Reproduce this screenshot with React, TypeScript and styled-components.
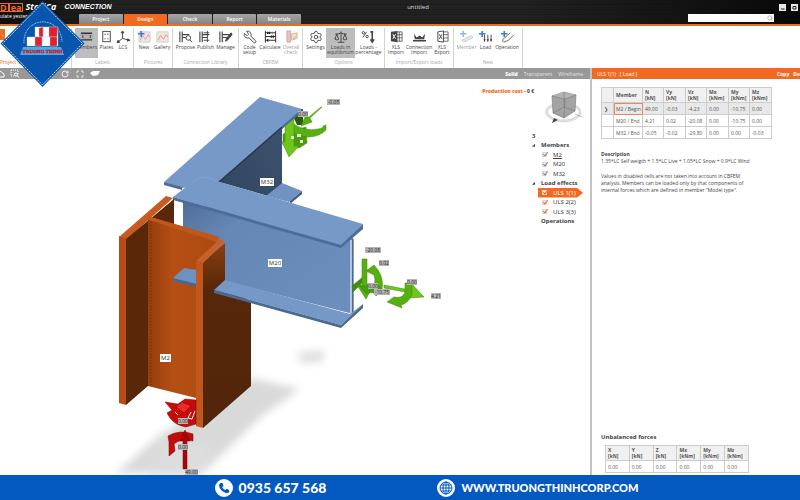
import React from "react";
import styled, { createGlobalStyle } from "styled-components";
import { Wrench, Settings, Scale, Search, RotateCw, Maximize } from "lucide-react";

const Global = createGlobalStyle`
  * { box-sizing: border-box; }
  body { margin: 0; background: #fff; overflow: hidden; }
  button, input { font: inherit; color: inherit; border: 0; padding: 0; margin: 0; background: none; }
  svg { display: block; flex: none; }
`;

const ORANGE = "#f26a21";

const Page = styled.div`
  position: relative;
  min-height: 100vh;
  display: flex;
  flex-direction: column;
  font: 5px/6px "Open Sans", "Noto Sans", sans-serif;
  color: #444;
`;

/* ---------- title bar ---------- */
const TopBar = styled.header`
  height: 26px;
  display: grid;
  grid-template-rows: 14px 10px;
  border-bottom: 2px solid ${ORANGE};
  background:
    linear-gradient(90deg, rgba(0, 0, 0, 0.5), transparent 15%, transparent 65%, rgba(0, 0, 0, 0.75)),
    repeating-linear-gradient(180deg, #161616 0, #2c2c2c 1px, #191919 2px, #252525 3px, #1a1a1a 5px);
`;
const TitleRow = styled.div`
  display: grid;
  grid-template-columns: 1fr 36px 1fr;
  align-items: center;
  padding-left: 36px;
  color: #ddd;
`;
const Brand = styled.div`
  display: flex;
  align-items: center;
  gap: 2px;
  margin-left: -38px;
  color: #fff;
  font: italic 700 9px/12px "Open Sans", sans-serif;
  white-space: nowrap;
`;
const BrandBox = styled.span`
  border: 1px solid ${ORANGE};
  color: ${ORANGE};
  font-style: normal;
  line-height: 7px;
  height: 9px;
  padding: 0 1px;
  & + & { margin-left: -2px; }
`;
const Product = styled.span`
  margin-left: 6px;
  font: italic 700 7px/12px "Liberation Sans", sans-serif;
`;
const Title = styled.span`
  text-align: center;
  font-size: 6px;
`;
const WindowButtons = styled.div`
  display: flex;
  justify-content: flex-end;
  gap: 5px;
  padding-right: 2px;
`;
const WindowButton = styled.button`
  width: 7px;
  height: 7px;
  background: #e8e8e8;
  display: grid;
  place-items: center;
`;
const TabRow = styled.div`
  display: grid;
  grid-template-columns: 79px 222px 1fr 86px 26px;
  color: #fff;
`;
const Tagline = styled.span`
  font-size: 5px;
  line-height: 5px;
  white-space: nowrap;
`;
const Tabs = styled.nav`
  display: grid;
  grid-template-columns: repeat(5, 1fr);
  gap: 1px;
`;
const Tab = styled.button<{ $on?: boolean }>`
  background: ${(p) => (p.$on ? ORANGE : "linear-gradient(#a5a5a5, #858585)")};
  border-radius: 1px 1px 0 0;
  color: #fff;
  font-weight: 600;
`;
const SearchBox = styled.label`
  grid-column: 4;
  display: flex;
  align-items: center;
  height: 8px;
  background: #fff;
  color: #777;
  padding-right: 1px;
  input { flex: 1; min-width: 0; height: 8px; outline: 0; }
`;

/* ---------- ribbon ---------- */
const Ribbon = styled.div`
  display: flex;
  height: 42px;
  padding-top: 2px;
`;
const Group = styled.section<{ $w: number }>`
  width: ${(p) => p.$w}px;
  flex: none;
  border-right: 1px solid #d4d4d4;
  display: flex;
  flex-direction: column;
  justify-content: space-between;
`;
const Tools = styled.div`
  display: flex;
  justify-content: center;
`;
const Tool = styled.button<{ $w: number; $on?: boolean; $dim?: boolean }>`
  width: ${(p) => p.$w}px;
  height: 30px;
  flex: none;
  display: flex;
  flex-direction: column;
  align-items: center;
  gap: 1px;
  padding-top: 2px;
  line-height: 5px;
  white-space: pre-line;
  background: ${(p) => (p.$on ? "#bdbdbd" : "none")};
  opacity: ${(p) => (p.$dim ? 0.55 : 1)};
`;
const Caption = styled.div<{ $hot?: boolean }>`
  text-align: ${(p) => (p.$hot ? "left" : "center")};
  color: ${(p) => (p.$hot ? ORANGE : "#aaa")};
  padding-bottom: 3px;
  white-space: nowrap;
`;
const ProjectButton = styled.button`
  width: 5px;
  height: 11px;
  margin-top: 1px;
  background: ${ORANGE};
  color: #fff;
`;

const paths: Record<string, React.ReactNode> = {
  members: <g stroke="#333" strokeWidth="1.4"><path d="M2 3.500H14M2 10.500H14" /><path d="M4 5.500V8.500M12 5.500V8.500" strokeWidth="1" /><path d="M1 5.500H14V8.500H1" stroke="#777" strokeWidth=".5" /></g>,
  plates: <><rect x="4" y="1.500" width="8" height="11" /><path d="M6.500 4v1M9.500 4v1M6.500 9v1M9.500 9v1" strokeWidth="1.500" /></>,
  lcs: <><path d="M7 2V9L14 11M7 9L2 13" /><path d="M5.500 3L7 1L8.500 3ZM12.500 9.500L15 11L12 12ZM2 11L1 13.500L4 13Z" fill="#444" /></>,
  picture: <><rect x="2" y="2" width="12" height="11" fill="#eee5e2" stroke="#bbb" strokeWidth=".6" /><path d="M3 11L6 6L9 10L12 5L14 8" stroke="#e69b80" /></>,
  connection: <><path d="M2 1.500V13M4.500 1.500V13M5 5H12M5 8H10" strokeWidth="1.200" /></>,
  calculate: <><path d="M2.500 1V13.500M13.500 1V13.500M2.500 3H13.500M2.500 7H13.500M2.500 11H13.500" stroke="#222" /><path d="M5 1.800v2.400M7 1.800v2.400M9 5.800v2.400M11 5.800v2.400M5 9.800v2.400" stroke="#222" strokeWidth="1.500" /><path d="M10 1.800v2.400M6 9.800v2.400" stroke="#e34b32" /></>,
  overall: <><path d="M3 1H7V13H3Z" fill="#d4938b" stroke="#b85e55" /><path d="M8 4L14 3V9L8 11Z" fill="#dfc19b" stroke="#a88b64" /><path d="M9 8L11 10L14 5" stroke="#53a653" /></>,
  percent: <><path d="M2 8L6 2" /><circle cx="2.500" cy="3" r="1.300" /><circle cx="6.500" cy="7" r="1.300" /><path d="M10 2H13M12 2V12M10 10L12 13L14 10" strokeWidth="1.700" /></>,
  excel: <><path d="M8 2H14V12H8M8 5H14M8 8.500H14M11 2V12" strokeWidth=".8" /><path d="M2 2L9 1V13L2 12Z" fill="#444" stroke="none" /><path d="M4 4.500L7 9.500M7 4.500L4 9.500" stroke="#fff" /></>,
  excelOut: <><path d="M8 2H14V12H8M8 5H14M8 8.500H14" strokeWidth=".8" /><path d="M3 2L9 1V13L3 12Z" fill="#fff" /><path d="M4.500 4.500L7.500 9.500M7.500 4.500L4.500 9.500" /></>,
  connImport: <><path d="M1 11.500H15" strokeWidth="1.700" /><path d="M2 4L5 8L8 6L11 8L14 4L13 10H3Z" fill="#444" stroke="none" /></>,
  member: <path d="M3 11L13 6L15 8L5 13Z" fill="#ddd" stroke="#888" strokeWidth=".8" />,
  load: <><path d="M7 5V12M10.500 5V12M14 5V12" /><path d="M5.800 10L7 13L8.200 10ZM9.300 10L10.500 13L11.700 10ZM12.800 10L14 13L15.200 10Z" fill="#444" stroke="none" /></>,
  operation: <path d="M3 10L11 3M4 13L9 11L15 5M3 10V13" stroke="#666" />,
};
const magnify = <><circle cx="11" cy="8.500" r="2.500" fill="#fff" /><path d="M12.500 10.500L15 13" /></>;
const plus = <path d="M1 4H8M4.500 1V7.500" stroke="#3b80cc" strokeWidth="1.800" />;

function Icon({ name, extra }: { name: string; extra?: React.ReactNode }) {
  return (
    <svg width="15" height="14" viewBox="0 0 16 15" fill="none" stroke="#444" strokeWidth="1">
      {paths[name]}
      {extra}
    </svg>
  );
}
const lucide = { size: 14, strokeWidth: 1.6, color: "#444" };
const FlippedWrench = styled(Wrench)`
  transform: scaleX(-1);
`;

type ToolDef = { label: string; w: number; icon: React.ReactNode; on?: boolean; dim?: boolean };
const groups: { name: string; w: number; tools: ToolDef[] }[] = [
  { name: "Labels", w: 62, tools: [
    { label: "Members", w: 23, icon: <Icon name="members" />, on: true },
    { label: "Plates", w: 18, icon: <Icon name="plates" /> },
    { label: "LCS", w: 15, icon: <Icon name="lcs" /> },
  ] },
  { name: "Pictures", w: 39, tools: [
    { label: "New", w: 18, icon: <Icon name="picture" extra={plus} /> },
    { label: "Gallery", w: 18, icon: <Icon name="picture" /> },
  ] },
  { name: "Connection Library", w: 66, tools: [
    { label: "Propose", w: 20, icon: <Icon name="connection" extra={magnify} /> },
    { label: "Publish", w: 20, icon: <Icon name="connection" extra={<path d="M6 3H12M6 11H12M10 1V13" />} /> },
    { label: "Manage", w: 20, icon: <Icon name="connection" extra={<path d="M8 12L9 9L14 3L15 5L10 11Z" fill="#444" />} /> },
  ] },
  { name: "CBFEM", w: 64, tools: [
    { label: "Code\nsetup", w: 18, icon: <FlippedWrench {...lucide} /> },
    { label: "Calculate", w: 23, icon: <Icon name="calculate" /> },
    { label: "Overall\ncheck", w: 19, icon: <Icon name="overall" />, dim: true },
  ] },
  { name: "Options", w: 82, tools: [
    { label: "Settings", w: 21, icon: <Settings {...lucide} /> },
    { label: "Loads in\nequilibrium", w: 29, icon: <Scale {...lucide} />, on: true },
    { label: "Loads -\npercentage", w: 27, icon: <Icon name="percent" /> },
  ] },
  { name: "Import/Export loads", w: 69, tools: [
    { label: "XLS\nImport", w: 19, icon: <Icon name="excel" /> },
    { label: "Connection\nImport", w: 27, icon: <Icon name="connImport" /> },
    { label: "XLS\nExport", w: 19, icon: <Icon name="excelOut" /> },
  ] },
  { name: "New", w: 69, tools: [
    { label: "Member", w: 20, icon: <Icon name="member" extra={plus} />, dim: true },
    { label: "Load", w: 18, icon: <Icon name="load" extra={plus} /> },
    { label: "Operation", w: 25, icon: <Icon name="operation" extra={plus} /> },
  ] },
];

/* ---------- work area ---------- */
const Work = styled.main`
  flex: 1;
  display: grid;
  grid-template-columns: 1fr 2px 208px;
  min-height: 0;
`;
const Splitter = styled.div`
  background: #c4c4c4;
`;
const Column = styled.section`
  display: flex;
  flex-direction: column;
  min-width: 0;
`;
const ViewBar = styled.div`
  height: 11px;
  display: flex;
  align-items: center;
  gap: 6px;
  padding-right: 7px;
  background: #989898;
  color: #eee;
`;
const ViewTools = styled.div`
  display: grid;
  grid-template-columns: 10px 24px 27px 15px 14px 12px;
  align-items: center;
  margin-right: auto;
`;
const ViewMode = styled.button<{ $on?: boolean }>`
  font-weight: ${(p) => (p.$on ? 800 : 400)};
  color: ${(p) => (p.$on ? "#fff" : "#e4e4e4")};
`;
const Viewport = styled.div`
  position: relative;
  flex: 1;
`;
const Model = styled.svg`
  width: 100%;
  height: 100%;
`;
const Cost = styled.div`
  position: absolute;
  top: 9px;
  right: 56px;
  font-weight: 700;
  color: #333;
  b { color: ${ORANGE}; }
`;
const CubeHolder = styled.div`
  position: absolute;
  top: 10px;
  right: 6px;
`;
const Tree = styled.div`
  position: absolute;
  top: 52px;
  right: 7px;
  width: 51px;
  height: 95px;
  display: grid;
  grid-template-rows: repeat(10, 1fr);
  font: 6px/8px "Noto Sans", sans-serif;
`;
const Node = styled.div<{ $leaf?: boolean; $on?: boolean }>`
  display: flex;
  align-items: center;
  gap: 6px;
  font-weight: ${(p) => (p.$leaf ? 400 : 700)};
  margin-left: ${(p) => (p.$leaf ? 6 : 0)}px;
  padding-left: ${(p) => (p.$leaf ? 4 : 0)}px;
  color: ${(p) => (p.$on ? "#fff" : "#444")};
  background: ${(p) => (p.$on ? ORANGE : "none")};
  clip-path: ${(p) => (p.$on ? "polygon(0 0, 87% 0, 100% 50%, 87% 100%, 0 100%)" : "none")};
`;
const Twisty = styled.span<{ $empty?: boolean }>`
  width: 3px;
  height: 3px;
  background: ${(p) => (p.$empty ? "none" : "#444")};
  clip-path: polygon(100% 0, 100% 100%, 0 100%);
`;
const TreeLabel = styled.label`
  display: flex;
  align-items: center;
  gap: 6px;
`;
const Tick = styled.input<{ $tone: string }>`
  appearance: none;
  width: 5px;
  height: 5px;
  background: #eee;
  border: 1px solid #d8d8d8;
  &:checked::after {
    content: "";
    display: block;
    width: 2px;
    height: 4px;
    margin: -2px 0 0 1px;
    border: solid ${(p) => p.$tone};
    border-width: 0 1px 1px 0;
    transform: rotate(40deg);
  }
`;

/* ---------- load panel ---------- */
const PanelBar = styled.div`
  height: 11px;
  display: flex;
  align-items: center;
  justify-content: space-between;
  padding-left: 5px;
  background: ${ORANGE};
  color: #fff;
  white-space: pre;
`;
const PanelActions = styled.div`
  display: flex;
  gap: 4px;
  font-weight: 700;
`;
const PanelBody = styled.div`
  flex: 1;
  display: flex;
  flex-direction: column;
  padding: 8px 9px 2px;
`;
const Grid = styled.table`
  border-collapse: collapse;
  table-layout: fixed;
  width: 171px;
  color: #555;
  th, td { border: 1px solid #ccc; padding: 0 2px; text-align: left; white-space: nowrap; }
  th { height: 15px; background: #f0f0f0; font-weight: 700; line-height: 6px; }
  td { height: 12px; }
`;
const Forces = styled(Grid)`
  width: 144px;
  margin: 4px 0 0 4px;
`;
const Row = styled.tr<{ $on?: boolean }>`
  background: ${(p) => (p.$on ? "#e8e8e8" : "#fff")};
  td:nth-child(2) { outline: ${(p) => (p.$on ? "1px solid #e58a5c" : "none")}; outline-offset: -1px; }
`;
const Heading = styled.h2`
  margin: 0;
  font-size: 5px;
  line-height: 7px;
`;
const BigHeading = styled(Heading)`
  margin-top: auto;
  font: 700 6px/8px "Noto Sans", sans-serif;
`;
const Description = styled.div`
  margin-top: 12px;
  p { margin: 0 0 8px; line-height: 7px; white-space: nowrap; }
`;

/* ---------- footer ---------- */
const Footer = styled.footer`
  height: 25px;
  display: flex;
  align-items: center;
  justify-content: center;
  gap: 111px;
  padding-left: 53px;
  background: #0459c1;
  color: #fff;
`;
const Contact = styled.a<{ $size: number }>`
  display: flex;
  align-items: center;
  gap: 6px;
  color: #fff;
  text-decoration: none;
  font: 900 ${(p) => p.$size}px/18px Lato, sans-serif;
`;
const LogoHolder = styled.div`
  position: absolute;
  top: 0;
  left: 0;
`;

function CompanyLogo() {
  return (
    <svg width="86" height="88" viewBox="0 0 86 88">
      <path d="M42.500 1L84.500 43.500L42.500 87L.5 43.500Z" fill="#0756ab" />
      <path d="M42.500 3L82.500 43.500L42.500 85L2.500 43.500Z" fill="none" stroke="#fff" strokeWidth=".8" strokeDasharray="2 1" />
      <path d="M24 43C23 16 61 14 62 42" fill="none" stroke="#a9cdf4" strokeWidth="1" strokeDasharray="1 .7" />
      <g stroke="#b8c8dc" strokeWidth=".4">
        <path d="M35 27H58V37H35Z" fill="#fff" /><path d="M39 28L43 27V37H39ZM49 27H58L57 37H49Z" fill="#e4202d" />
        <path d="M27 37H58V46H27Z" fill="#fff" /><path d="M35 37H42V46H35ZM50 37H57V46H50Z" fill="#e4202d" />
      </g>
      <path d="M23 47H61L64 55H20Z" fill="#48aee8" />
      <text x="42.500" y="53" textAnchor="middle" fontFamily="Liberation Serif" fontWeight="700" fontSize="5" fill="#c9202b" stroke="#c9202b" strokeWidth=".4">TRUONG THINH</text>
    </svg>
  );
}

function Tag({ x, y, children }: { x: number; y: number; children: string }) {
  const w = Math.round(children.length * 2.6);
  return (
    <g>
      <rect x={x} y={y} width={w} height="6" fill="#b5b5b5" />
      <text x={x + w / 2} y={y + 5} textAnchor="middle" fontSize="5" fill="#222">{children}</text>
    </g>
  );
}
function Name({ x, y, children }: { x: number; y: number; children: string }) {
  const w = children.length * 3 + 5;
  return (
    <g>
      <rect x={x} y={y} width={w} height="8" fill="#fff" />
      <text x={x + w / 2} y={y + 6} textAnchor="middle" fontSize="6" fill="#333">{children}</text>
    </g>
  );
}

function SteelModel() {
  return (
    <Model viewBox="0 79 590 396" preserveAspectRatio="xMidYMid slice" role="img" aria-label="Steel connection model">
      <defs>
        <filter id="soft" x="-20%" y="-20%" width="140%" height="140%"><feGaussianBlur stdDeviation="4" /></filter>
        <linearGradient id="web" x1="0" y1="0" x2="1" y2="1"><stop offset="0" stopColor="#506c94" /><stop offset=".25" stopColor="#6587b5" /><stop offset="1" stopColor="#6c8fbe" /></linearGradient>
        <linearGradient id="webDark" x1="0" y1="1" x2="1" y2="0"><stop offset="0" stopColor="#32465f" /><stop offset="1" stopColor="#3b526e" /></linearGradient>
        <linearGradient id="rust"><stop offset="0" stopColor="#953d0c" /><stop offset=".35" stopColor="#b54f14" /><stop offset="1" stopColor="#ad4911" /></linearGradient>
        <linearGradient id="side" x1="0" y1="0" x2="0" y2="1"><stop offset="0" stopColor="#8c3e12" /><stop offset=".25" stopColor="#572709" /><stop offset="1" stopColor="#52250b" /></linearGradient>
      </defs>
      <g filter="url(#soft)">
        <path d="M250 378L300 389L262 416L205 471L115 474L160 435Z" fill="#d9d9d9" />
        <path d="M160 440L215 445L200 476L150 476Z" fill="#ddd" />
        <path d="M296 353L325 350L322 362L302 363Z" fill="#ddd" />
      </g>

      <path d="M296 112L303 109L303 125H297L293 116Z" fill="#2b5a0c" />
      <g fill="#56b010" stroke="#418b0c" strokeWidth=".5">
        <path d="M283 134L306 127L307 143L299 148L283 145Z" fill="#4b9c0f" />
        <path d="M322 107L310 118L312 122L301 126L305 117L309 117L321 107Z" />
        <path d="M292 123Q305 132 318 129Q324 128 323 126L326 125V130Q319 137 308 137Q296 136 290 130Z" />
        <path d="M285 120V142H282L289 157L299 146H294V118Z" fill="#6cc71a" />
      </g>
      <path d="M291 136h3v3h-3ZM297 134h4v3h-4ZM300 140h3v3h-3Z" fill="#e6f5d8" />

      <path d="M164 182L260 97L302 109L301 112L282 129L220 184L182 188Z" fill="#7699c7" />
      <path d="M164 182L182 187L182 190L164 185ZM302 109V112L282 129V126Z" fill="#4d6b93" />
      <path d="M282 127V184L268 196L219 182Z" fill="url(#webDark)" />
      <path d="M282 127L219 182" stroke="#28394e" strokeWidth="1.500" />
      <path d="M282 183L302 191L289 202L266 196Z" fill="#7093c2" />
      <path d="M302 191V194L290 204V201Z" fill="#435d81" />

      <path d="M183 202L353 236V314L225 281L183 240Z" fill="url(#web)" />
      <path d="M173 197L190 184L220 182L363 224L341 246Z" fill="#7699c7" />
      <path d="M173 197L341 245L363 224V229L341 248L173 200Z" fill="#4c6d99" />
      <path d="M351 240V314" stroke="#c9d8ed" strokeWidth="1.500" />
      <path d="M353 239V315" stroke="#2c405c" />
      <path d="M192 183Q196 177 206 177Q215 179 217 183" fill="none" stroke="#8dabd1" strokeWidth=".5" />

      <path d="M119 237L166 196L173 198L126 240Z" fill="#c75b20" />
      <path d="M126 239L174 199V225L148 220V386L126 405Z" fill="#592709" />
      <path d="M119 236L126 239V405L119 403Z" fill="#b64d13" />
      <path d="M148 219L218 239L204 262V400L148 386Z" fill="url(#rust)" />
      <path d="M146 219L151 217L220 237L217 242Z" fill="#c1571c" />
      <path d="M151 222V387" stroke="#632c0b" strokeDasharray="1 2" />
      <path d="M173 278L184 268L197 270V286L173 281Z" fill="#6d91c1" />
      <path d="M173 278L197 284V287L173 281Z" fill="#466790" />
      <path d="M203 262L225 243V281L251 303V386L203 428Z" fill="url(#side)" />
      <path d="M196 261L220 239L225 242L203 263Z" fill="#c9602b" />
      <path d="M196 261L203 263V428L196 426Z" fill="#c0581e" />
      <path d="M214 290L225 280L350 314L363 304L341 325Z" fill="#7598c6" />
      <path d="M214 290L341 325L363 304V308L341 328L214 293Z" fill="#4a6993" />

      <g fill="#56b010" stroke="#3f850d" strokeWidth=".5">
        <path d="M352 286L364 276L366 279L353 292Z" fill="#408a0e" />
        <path d="M366 271L374 265L378 270Q384 279 382 290L376 296L371 290Q377 284 374 275Z" />
        <path d="M362 259H367V284H374L366 299L357 285H362Z" />
        <path d="M359 286L378 285L382 292L366 293Z" fill="#489a0e" />
        <path d="M384 285L410 290V282L424 297L410 298V293L384 288Z" fill="#6cc71a" />
        <path d="M405 283H412V294Q409 303 401 305L402 308L387 302L394 297Q403 299 405 292Z" />
      </g>
      <g fill="#c60b0b" stroke="#790606" strokeWidth=".5">
        <path d="M165 402L178 404L185 399L196 400V424L186 427Q175 425 170 418L167 413L172 410Z" />
        <path d="M182 402L191 406L184 413L176 407Z" fill="#ef2929" />
        <path d="M168 436Q180 429 193 434V441Q181 438 174 444L175 451L169 456V442Z" />
        <path d="M185 430L190 441H187V469H183V441H180Z" fill="#a80707" />
      </g>
      <path d="M191 412L188 418L192 419L195 411M175 412L178 415" stroke="#fff" strokeWidth="1" fill="none" />

      <Name x={260} y={178}>M32</Name>
      <Name x={268} y={259}>M20</Name>
      <Name x={160} y={354}>M2</Name>
      <Tag x={327} y={99}>-0.05</Tag>
      <Tag x={298} y={111}>0.00</Tag>
      <Tag x={365} y={247}>-20.08</Tag>
      <Tag x={379} y={260}>0.02</Tag>
      <Tag x={368} y={283}>0.00</Tag>
      <Tag x={374} y={289}>-10.75</Tag>
      <Tag x={407} y={279}>0.00</Tag>
      <Tag x={431} y={293}>4.21</Tag>
      <Tag x={178} y={418}>0.00</Tag>
      <Tag x={178} y={444}>0.00</Tag>
      <Tag x={185} y={469}>49.00</Tag>
    </Model>
  );
}

const loads = [
  ["M2 / Begin", "49.00", "-0.03", "-4.23", "0.00", "-10.75", "0.00"],
  ["M20 / End", "4.21", "0.02", "-20.08", "0.00", "-10.75", "0.00"],
  ["M32 / End", "-0.05", "-0.02", "-29.80", "0.00", "0.00", "-0.03"],
];
const forceHead = ["N|kN", "Vy|kN", "Vz|kN", "Mx|kNm", "My|kNm", "Mz|kNm"];
const sumHead = ["X|kN", "Y|kN", "Z|kN", "Mx|kNm", "My|kNm", "Mz|kNm"];

function HeadCell({ text }: { text: string }) {
  const [name, unit] = text.split("|");
  return <th>{name}<br />[{unit}]</th>;
}
function Leaf({ name, tone, on, line }: { name: string; tone: string; on?: boolean; line?: boolean }) {
  return (
    <Node $leaf $on={on}>
      <TreeLabel>
        <Tick type="checkbox" defaultChecked $tone={tone} />
        {line ? <u>{name}</u> : name}
      </TreeLabel>
    </Node>
  );
}

export default function App() {
  return (
    <Page>
      <Global />
      <TopBar>
        <TitleRow>
          <Brand>
            <BrandBox>D</BrandBox><BrandBox>ea</BrandBox>
            <span>StatiCa</span>
            <Product>CONNECTION</Product>
          </Brand>
          <Title>untitled</Title>
          <WindowButtons>
            <WindowButton aria-label="Minimize"><svg width="7" height="7"><path d="M2 5H5.500" stroke="#222" /></svg></WindowButton>
            <WindowButton aria-label="Maximize"><svg width="7" height="7"><path d="M2 2.500H5V5H2Z" fill="none" stroke="#222" /></svg></WindowButton>
          </WindowButtons>
        </TitleRow>
        <TabRow>
          <Tagline>ulate yesterday's</Tagline>
          <Tabs>
            <Tab>Project</Tab><Tab $on>Design</Tab><Tab>Check</Tab><Tab>Report</Tab><Tab>Materials</Tab>
          </Tabs>
          <SearchBox><input type="text" aria-label="Search" /><Search size={6} /></SearchBox>
        </TabRow>
      </TopBar>

      <Ribbon>
        <Group $w={72}>
          <ProjectButton aria-label="Project items">–</ProjectButton>
          <Caption $hot>Project items</Caption>
        </Group>
        {groups.map((g) => (
          <Group key={g.name} $w={g.w}>
            <Tools>
              {g.tools.map((t) => (
                <Tool key={t.label} $w={t.w} $on={t.on} $dim={t.dim}>{t.icon}<span>{t.label}</span></Tool>
              ))}
            </Tools>
            <Caption>{g.name}</Caption>
          </Group>
        ))}
      </Ribbon>

      <Work>
        <Column>
          <ViewBar>
            <ViewTools>
              <svg width="6" height="8" viewBox="0 0 6 8"><path d="M0 1L4 4V7H0" fill="none" stroke="#fff" /></svg>
              <svg width="10" height="9" viewBox="0 0 10 9" fill="none" stroke="#fff"><path d="M1 1H8V5M1 1V7H4" strokeDasharray="1 1" /><circle cx="6" cy="5.500" r="1.500" /><path d="M7 6.500L9 8.500" /></svg>
              <svg width="8" height="8" viewBox="0 0 8 8"><path d="M4 0V8M0 4H8" stroke="#fff" /></svg>
              <RotateCw size={8} strokeWidth={3} />
              <Maximize size={8} strokeWidth={3} />
              <svg width="10" height="7" viewBox="0 0 10 7"><path d="M0 3L3 1H10L8 5L3 6Z" fill="#fff" /></svg>
            </ViewTools>
            <ViewMode $on>Solid</ViewMode><ViewMode>Transparent</ViewMode><ViewMode>Wireframe</ViewMode>
          </ViewBar>
          <Viewport>
            <SteelModel />
            <Cost><b>Production cost</b> - 0 €</Cost>
            <CubeHolder>
              <svg width="40" height="38" viewBox="0 0 40 38">
                <path d="M10 16Q1 19 3 25Q8 32 21 32Q32 31 36 25Q37 20 31 17" fill="none" stroke="#ddd" strokeWidth="3" />
                <path d="M8 7L20 3L32 6L31 22L20 29L9 24Z" fill="#a3a3a3" stroke="#777" strokeWidth=".6" />
                <path d="M8 7L20 3L32 6L21 10Z" fill="#b4b4b4" />
                <path d="M8 7L21 10L32 6M21 10L20 29M20 3V18L9 24M20 18L31 22" fill="none" stroke="#777" strokeWidth=".6" />
                <path d="M8 34L10 29L14 31Z" fill="#444" />
                <path d="M31 25L38 28" stroke="#999" strokeWidth=".6" />
              </svg>
            </CubeHolder>
            <Tree>
              <Node>3</Node>
              <Node><Twisty />Members</Node>
              <Leaf name="M2" tone="#888" line /><Leaf name="M20" tone="#888" /><Leaf name="M32" tone="#888" />
              <Node><Twisty />Load effects</Node>
              <Leaf name="ULS 1(1)" tone={ORANGE} on /><Leaf name="ULS 2(2)" tone={ORANGE} /><Leaf name="ULS 3(3)" tone={ORANGE} />
              <Node><Twisty $empty />Operations</Node>
            </Tree>
          </Viewport>
        </Column>
        <Splitter />
        <Column>
          <PanelBar>
            <span>ULS 1(1)   [ Load ]</span>
            <PanelActions><button>Copy</button><button>De</button></PanelActions>
          </PanelBar>
          <PanelBody>
            <Grid>
              <colgroup><col width="12" /><col width="29" /><col width="21" /><col width="22" /><col width="21" /><col width="22" /><col width="21" /><col width="22" /></colgroup>
              <thead><tr><th /><th>Member</th>{forceHead.map((h) => <HeadCell key={h} text={h} />)}</tr></thead>
              <tbody>
                {loads.map((r, i) => (
                  <Row key={r[0]} $on={i === 0}><td>{i === 0 ? "❯" : ""}</td>{r.map((c, k) => <td key={k}>{c}</td>)}</Row>
                ))}
              </tbody>
            </Grid>
            <Description>
              <Heading>Description</Heading>
              <p>1.35*LC Self weigth + 1.5*LC Live + 1.05*LC Snow + 0.9*LC Wind</p>
              <p>Values in disabled cells are not taken into account in CBFEM<br />analysis. Members can be loaded only by that components of<br />internal forces which are defined in member "Model type".</p>
            </Description>
            <BigHeading>Unbalanced forces</BigHeading>
            <Forces>
              <thead><tr>{sumHead.map((h) => <HeadCell key={h} text={h} />)}</tr></thead>
              <tbody><tr>{sumHead.map((h) => <td key={h}>0.00</td>)}</tr></tbody>
            </Forces>
          </PanelBody>
        </Column>
      </Work>

      <Footer>
        <Contact $size={14} href="tel:0935657568">
          <svg width="18" height="18" viewBox="0 0 18 18"><circle cx="9" cy="9" r="9" fill="#fff" /><path d="M5.500 4L7.500 4L8.500 7L7.200 8.200Q8.200 10.200 10.300 11L11.500 9.800L14.200 11V13Q13 14.500 11 14Q5 12 4 6.500Q4 5 5.500 4Z" fill="#0459c1" /></svg>
          0935 657 568
        </Contact>
        <Contact $size={11} href="#site">
          <svg width="18" height="18" viewBox="0 0 18 18"><circle cx="9" cy="9" r="9" fill="#fff" /><g fill="none" stroke="#0459c1"><circle cx="9" cy="9" r="6" /><ellipse cx="9" cy="9" rx="3" ry="6" /><path d="M3 9H15M4 6H14M4 12H14M9 3V15" /></g></svg>
          WWW.TRUONGTHINHCORP.COM
        </Contact>
      </Footer>
      <LogoHolder><CompanyLogo /></LogoHolder>
    </Page>
  );
}
